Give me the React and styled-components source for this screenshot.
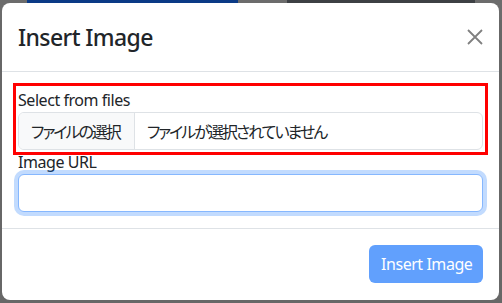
import React from "react";
import styled, { createGlobalStyle } from "styled-components";

const Global = createGlobalStyle`
  html, body { margin: 0; padding: 0; }
  body {
    background: #676767;
    font-family: "Noto Sans", "Noto Sans CJK JP", sans-serif;
    color: #212529;
    width: 502px;
    height: 303px;
    overflow: hidden;
  }
  * { box-sizing: border-box; }
`;

const Page = styled.div`
  position: relative;
  width: 502px;
  height: 303px;
  background: #676767;
`;

const Strip = styled.div`
  display: flex;
  height: 20px;
`;

const StripBlock = styled.div`
  width: ${(p) => p.$w}px;
  background: ${(p) => p.$c};
`;

const Modal = styled.div`
  position: absolute;
  top: 3px;
  left: 2px;
  width: 497px;
  height: 297px;
  background: #fff;
  border-radius: 8px;
  display: flex;
  flex-direction: column;
  overflow: hidden;
`;

const Header = styled.div`
  display: flex;
  align-items: center;
  justify-content: space-between;
  padding: 16px;
  border-bottom: 1px solid #dee2e6;
`;

const Title = styled.h4`
  margin: 0;
  font-size: 23px;
  letter-spacing: -0.6px;
  font-weight: 500;
  line-height: 36px;
  color: #212529;
`;

const Close = styled.button`
  width: 24px;
  height: 24px;
  padding: 4px;
  margin-right: -4px;
  border: 0;
  background: transparent;
  display: flex;
  align-items: center;
  justify-content: center;
  cursor: pointer;
`;

const Body = styled.div`
  padding: 16px;
  display: flex;
  flex-direction: column;
`;

const Group = styled.div`
  display: flex;
  flex-direction: column;
  outline: ${(p) => (p.$highlight ? "3px solid #ff0000" : "none")};
  outline-offset: 2px;
`;

const Label = styled.label`
  font-size: 16px;
  letter-spacing: -0.45px;
  line-height: 24px;
  color: #212529;
  white-space: nowrap;
`;

const FileControl = styled.div`
  display: flex;
  height: 38px;
  border: 1px solid #dee2e6;
  border-radius: 6px;
  overflow: hidden;
  font-family: "Noto Sans CJK JP", sans-serif;
  font-feature-settings: "palt";
  font-size: 16px;
  letter-spacing: -2px;
  color: #212529;
  white-space: nowrap;
`;

const FileButton = styled.div`
  display: flex;
  align-items: center;
  padding: 0 14px 0 12px;
  background: #f8f9fa;
  border-right: 1px solid #dee2e6;
`;

const FileName = styled.div`
  display: flex;
  align-items: center;
  padding: 0 12px;
`;

const TextInput = styled.input`
  height: 38px;
  width: 100%;
  border: 1px solid #86b7fe;
  border-radius: 6px;
  box-shadow: 0 0 0 4px rgba(13, 110, 253, 0.25);
  outline: none;
  padding: 6px 12px;
  font-size: 16px;
  font-family: inherit;
`;

const Footer = styled.div`
  display: flex;
  justify-content: flex-end;
  padding: 16px;
  border-top: 1px solid #dee2e6;
`;

const PrimaryButton = styled.button`
  height: 38px;
  padding: 0 12px;
  border: 0;
  border-radius: 6px;
  background: #0d6efd;
  opacity: 0.65;
  color: #fff;
  font-family: inherit;
  font-size: 16px;
  letter-spacing: -0.45px;
  white-space: nowrap;
  width: 114px;
`;

export default function App() {
  return (
    <>
      <Global />
      <Page>
        <Strip>
          <StripBlock $w={27} $c="#6c6c6c" />
          <StripBlock $w={211} $c="#0b3a86" />
          <StripBlock $w={49} $c="#6c6c6c" />
          <StripBlock $w={188} $c="#3d4044" />
          <StripBlock $w={27} $c="#6c6c6c" />
        </Strip>
        <Modal>
          <Header>
            <Title>Insert Image</Title>
            <Close aria-label="Close">
              <svg width="16" height="16" viewBox="0 0 16 16">
                <path d="M1 1 L15 15 M15 1 L1 15" stroke="#808080" strokeWidth="1.8" />
              </svg>
            </Close>
          </Header>
          <Body>
            <Group $highlight>
              <Label>Select from files</Label>
              <FileControl>
                <FileButton>ファイルの選択</FileButton>
                <FileName>ファイルが選択されていません</FileName>
              </FileControl>
            </Group>
            <Group>
              <Label>Image URL</Label>
              <TextInput type="text" />
            </Group>
          </Body>
          <Footer>
            <PrimaryButton disabled>Insert Image</PrimaryButton>
          </Footer>
        </Modal>
      </Page>
    </>
  );
}
